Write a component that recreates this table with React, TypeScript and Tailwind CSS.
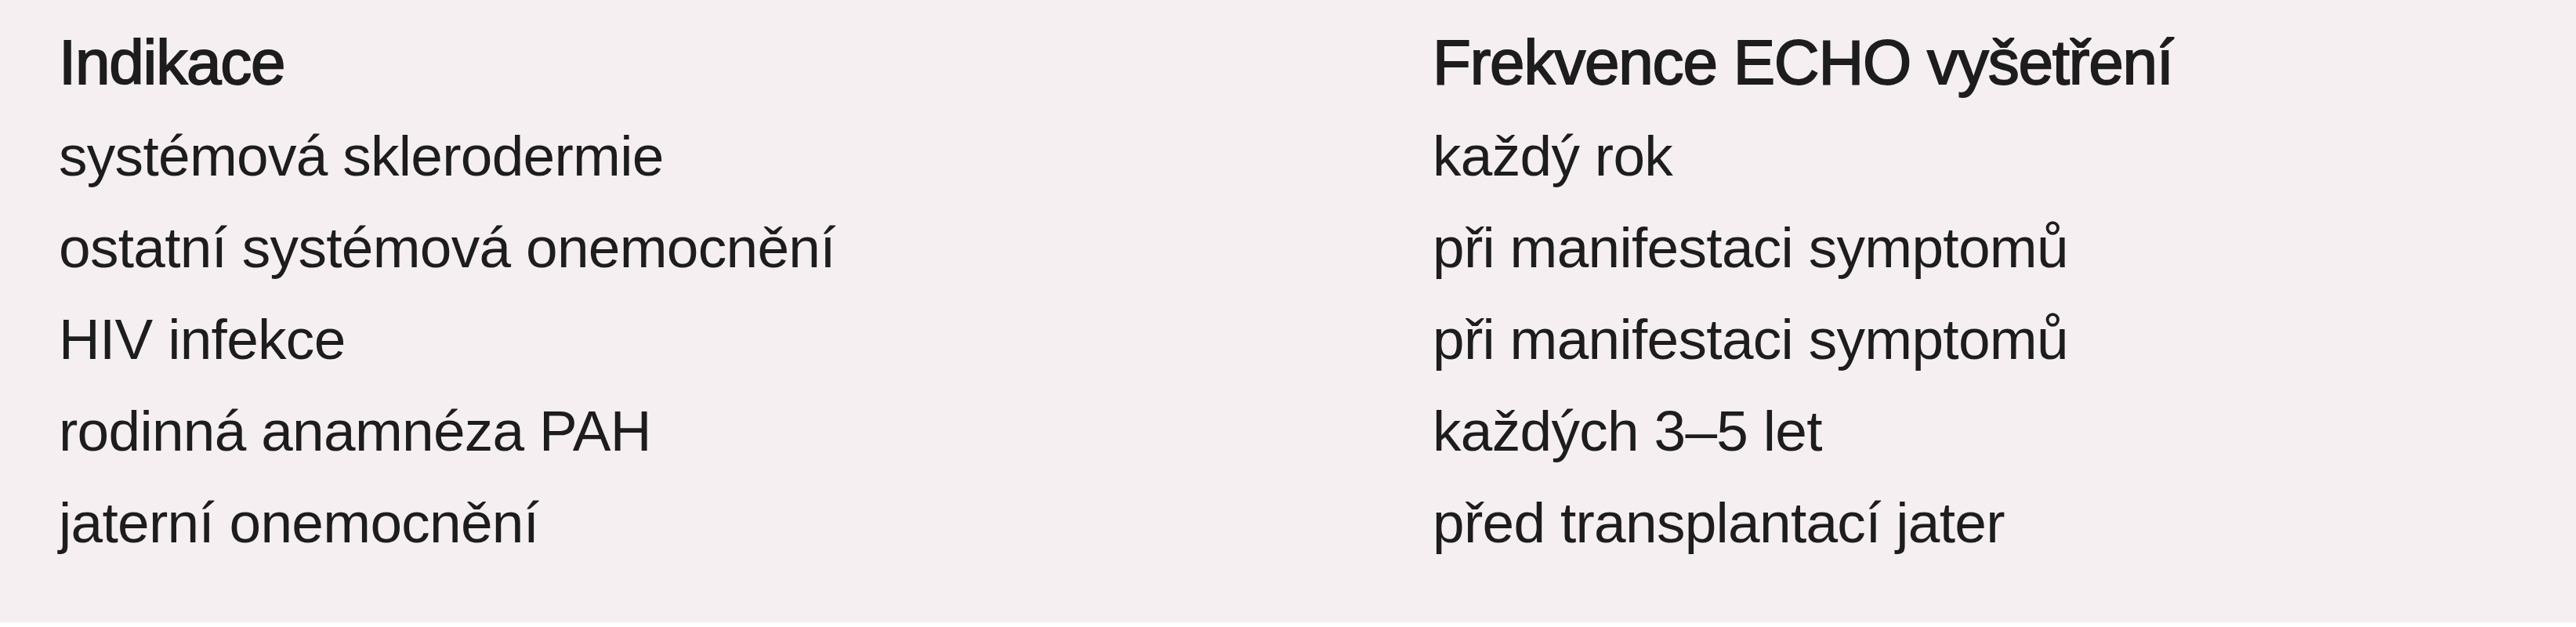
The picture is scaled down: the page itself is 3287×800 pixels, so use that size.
const rows: [string, string][] = [
  ['systémová sklerodermie', 'každý rok'],
  ['ostatní systémová onemocnění', 'při manifestaci symptomů'],
  ['HIV infekce', 'při manifestaci symptomů'],
  ['rodinná anamnéza PAH', 'každých 3–5 let'],
  ['jaterní onemocnění', 'před transplantací jater'],
];

export default function App() {
  return (
    <div className="h-[794px] w-full bg-[#f5eff1] pl-[75px] pt-[20px] font-['Liberation_Sans',Arial,sans-serif] text-[#1d1d1d]">
      {/* header row: medium weight, slightly larger than body */}
      <div className="grid grid-cols-[1753px_1fr] text-[80px] leading-[120px] tracking-[-1.2px] [-webkit-text-stroke:1.8px_#1d1d1d]">
        <div>Indikace</div>
        <div>Frekvence ECHO vyšetření</div>
      </div>
      {rows.map(([indication, frequency]) => (
        <div
          key={indication}
          className="grid grid-cols-[1753px_1fr] text-[73px] leading-[117px] tracking-[-0.7px]"
        >
          <div>{indication}</div>
          <div>{frequency}</div>
        </div>
      ))}
    </div>
  );
}
